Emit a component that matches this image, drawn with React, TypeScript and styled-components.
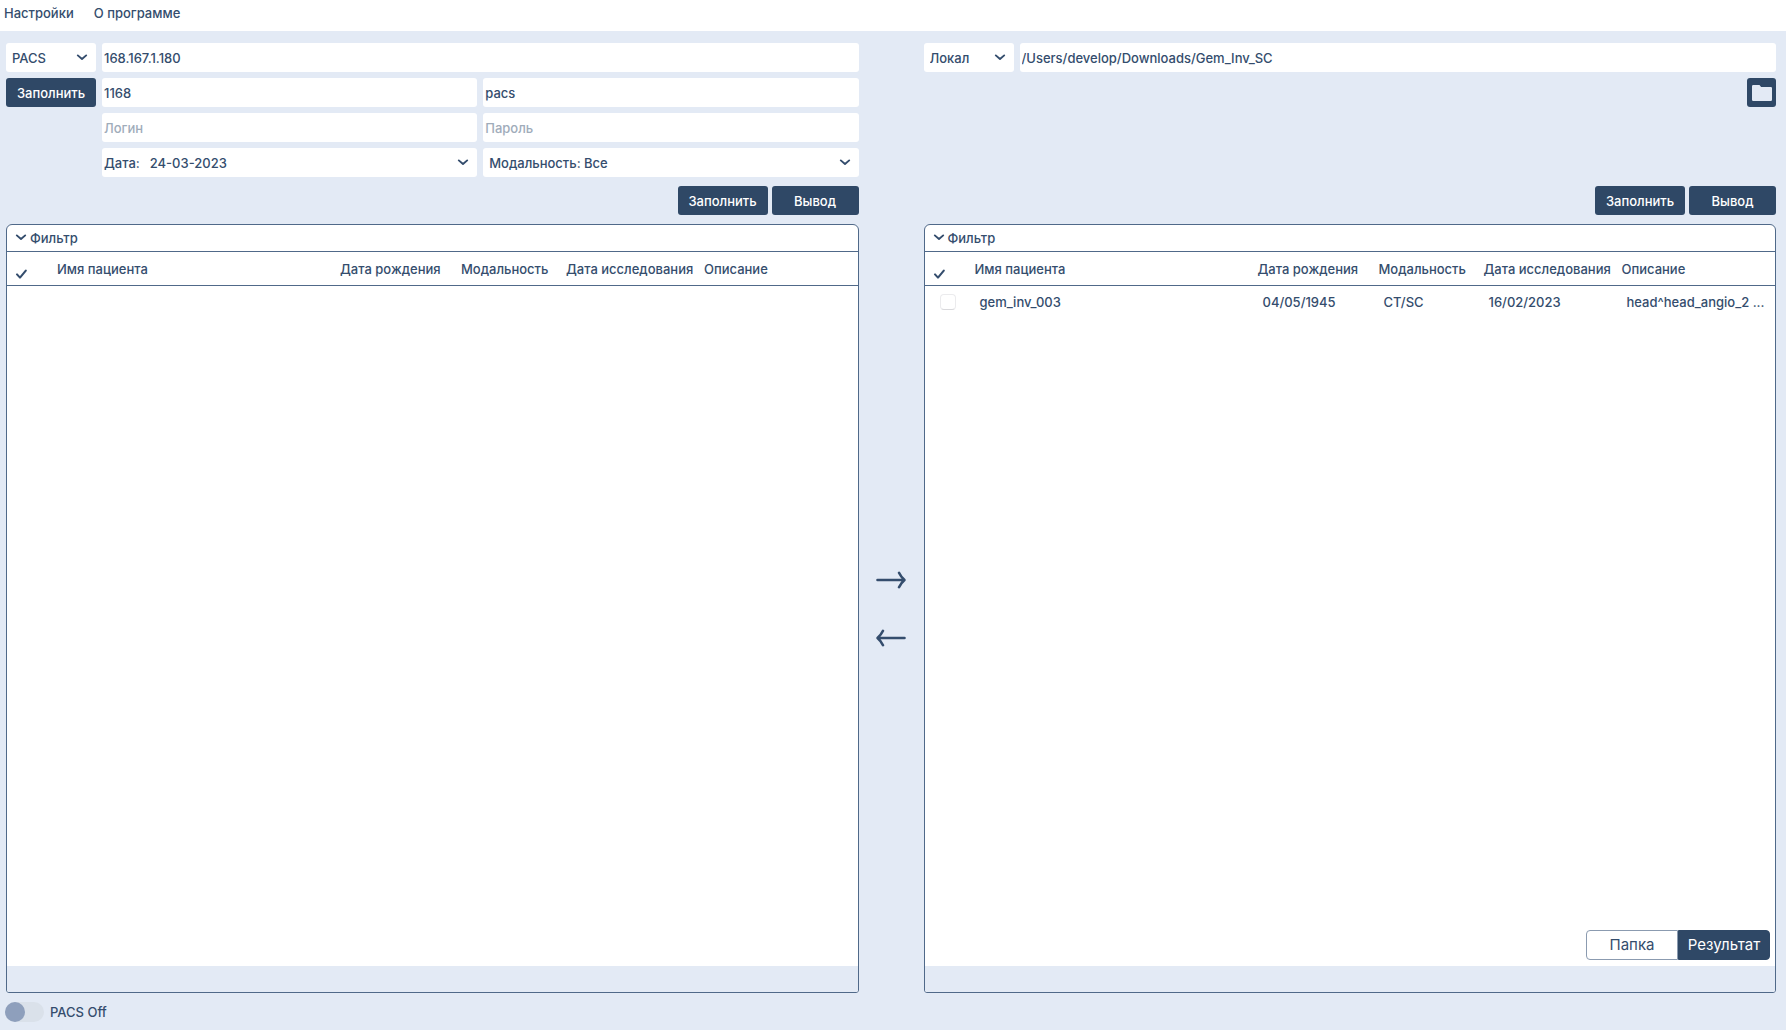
import React, { useState } from "react";
import styled, { createGlobalStyle } from "styled-components";

const color = {
  page: "#e3eaf5",
  ink: "#344d6d",
  fill: "#2f4866",
  line: "#506989",
  hint: "#a0acba",
  white: "#ffffff",
};

const GlobalStyle = createGlobalStyle`
  *, *::before, *::after { box-sizing: border-box; }
  body { margin: 0; background: ${color.page}; }
  body, button, input, select {
    font-family: Inter, "Liberation Sans", sans-serif;
    font-size: 13px;
    line-height: 18px;
    font-weight: 500;
    color: ${color.ink};
  }
`;

const Page = styled.div`
  min-height: 100vh;
  display: flex;
  flex-direction: column;
`;

const MenuBar = styled.nav`
  display: flex;
  gap: 20px;
  padding: 4px 4px 9px;
  background: ${color.white};
`;

const MenuItem = styled.button`
  border: 0;
  padding: 0;
  background: none;
`;

const Main = styled.main`
  flex: 1;
  display: grid;
  grid-template-columns: minmax(0, 1fr) 65px minmax(0, 1fr);
  grid-template-rows: auto 1fr;
  row-gap: 9px;
  padding: 12px 10px 0 6px;
`;

const Source = styled.section`
  display: flex;
  flex-direction: column;
  justify-content: space-between;
  gap: 9px;
`;

const Form = styled.div`
  display: grid;
  grid-template-columns: 90px minmax(0, 1fr) minmax(0, 1fr);
  gap: 6px;
`;

const Field = styled.input<{ $wide?: boolean }>`
  grid-column: ${(p) => (p.$wide ? "span 2" : "auto")};
  width: 100%;
  min-width: 0;
  height: 29px;
  padding: 0 2px;
  border: 0;
  border-radius: 3px;
  background: ${color.white};
  &::placeholder { color: ${color.hint}; opacity: 1; }
`;

const SelectBox = styled.div<{ $column?: number }>`
  grid-column: ${(p) => p.$column ?? "auto"};
  display: grid;
  grid-template-columns: auto minmax(0, 1fr);
  align-items: center;
  height: 29px;
  border-radius: 3px;
  background: ${color.white};
`;

const SelectLabel = styled.label`
  padding-left: 2px;
`;

const Select = styled.select<{ $inset: number }>`
  grid-column: 2;
  grid-row: 1;
  width: 100%;
  height: 29px;
  padding: 0 24px 0 ${(p) => p.$inset}px;
  border: 0;
  border-radius: 3px;
  background: transparent;
  appearance: none;
`;

const SelectMark = styled.span`
  grid-column: 2;
  grid-row: 1;
  justify-self: end;
  display: flex;
  padding-right: 8px;
  pointer-events: none;
`;

const Button = styled.button<{ $width: number }>`
  width: ${(p) => p.$width}px;
  height: 29px;
  padding: 0;
  border: 0;
  border-radius: 3px;
  background: ${color.fill};
  color: ${color.white};
`;

const FolderButton = styled(Button)`
  grid-column: 3;
  justify-self: end;
  display: grid;
  place-items: center;
`;

const Actions = styled.div`
  display: flex;
  justify-content: flex-end;
  gap: 4px;
`;

const Panel = styled.section`
  grid-row: 2;
  display: flex;
  flex-direction: column;
  border: 1px solid ${color.line};
  border-radius: 6px 6px 3px 3px;
  background: ${color.white};
  overflow: hidden;
`;

const FilterToggle = styled.button`
  display: flex;
  align-items: center;
  gap: 3px;
  height: 27px;
  padding: 0 8px;
  border: 0;
  border-bottom: 1px solid ${color.line};
  background: none;
`;

const PanelBody = styled.div`
  flex: 1;
`;

const PanelFooter = styled.div`
  height: 26px;
  background: ${color.page};
`;

const Table = styled.table`
  width: 100%;
  table-layout: fixed;
  border-collapse: separate;
  border-spacing: 0;
`;

const Col = styled.col<{ $width?: number }>`
  width: ${(p) => (p.$width ? `${p.$width}px` : "auto")};
`;

const HeadCell = styled.th`
  height: 34px;
  padding: 0;
  border-bottom: 1px solid ${color.line};
  text-align: left;
  font-weight: 500;
  white-space: nowrap;
`;

const MarkCell = styled(HeadCell)`
  padding: 12px 0 0 8px;
`;

const Cell = styled.td`
  height: 31px;
  padding: 0 0 0 5px;
  white-space: nowrap;
  overflow: hidden;
  text-overflow: ellipsis;
`;

const PickCell = styled(Cell)`
  padding: 0 0 0 15px;
`;

const Pick = styled.input`
  display: block;
  width: 16px;
  height: 16px;
  margin: 0;
  appearance: none;
  border: 1px solid #ebebed;
  border-bottom-color: #d9d9dc;
  border-radius: 4px;
  background: ${color.white};
  &:checked { background: ${color.fill}; }
`;

const Segments = styled.div`
  display: flex;
  justify-content: flex-end;
  padding: 6px 5px;
`;

const Segment = styled.button<{ $active: boolean }>`
  width: 92px;
  height: 30px;
  padding: 0;
  border: 1px solid ${(p) => (p.$active ? color.fill : "#8b9bb0")};
  background: ${(p) => (p.$active ? color.fill : color.white)};
  color: ${(p) => (p.$active ? color.white : color.ink)};
  font-size: 15px;
  font-weight: 400;
  &:first-child { border-radius: 4px 0 0 4px; }
  &:last-child { border-radius: 0 4px 4px 0; }
`;

const Transfer = styled.div`
  grid-row: 2;
  grid-column: 2;
  display: flex;
  flex-direction: column;
  align-items: center;
  justify-content: center;
  gap: 18px;
`;

const ArrowButton = styled.button`
  display: grid;
  place-items: center;
  width: 40px;
  height: 40px;
  padding: 0;
  border: 0;
  background: none;
`;

const StatusBar = styled.footer`
  display: flex;
  padding: 9px 5px 8px;
`;

const SwitchLabel = styled.label`
  display: flex;
  align-items: center;
  gap: 6px;
`;

const Switch = styled.input`
  width: 39px;
  height: 20px;
  margin: 0;
  display: flex;
  appearance: none;
  border-radius: 10px;
  background: #dae1ea;
  &::before {
    content: "";
    width: 20px;
    height: 20px;
    border-radius: 50%;
    background: #8e9fbc;
  }
  &:checked { justify-content: flex-end; }
`;

const Chevron = () => (
  <svg width="12" height="12" viewBox="0 0 12 12" fill="none" aria-hidden="true">
    <path d="M1.8 3.4 6 7l4.200-3.600" stroke={color.ink} strokeWidth="1.9" strokeLinecap="round" strokeLinejoin="round" />
  </svg>
);

const CheckMark = () => (
  <svg width="13" height="12" viewBox="0 0 13 12" fill="none" role="img" aria-label="Выбор">
    <path d="M2 6.4 5 9.600 10.800 2.600" stroke={color.ink} strokeWidth="2.100" strokeLinecap="round" strokeLinejoin="round" />
  </svg>
);

const FolderIcon = () => (
  <svg width="22" height="18" viewBox="0 0 22 18" aria-hidden="true">
    <path d="M1 2.200Q1 1 2.200 1h6.300l1.600 1.900h9.700Q21 2.900 21 4.100v11.700Q21 17 19.800 17H2.200Q1 17 1 15.800z" fill={color.page} />
  </svg>
);

const RightArrow = () => (
  <svg width="32" height="20" viewBox="0 0 32 20" fill="none" aria-hidden="true">
    <path d="M2.500 10H29M24 2.800Q26 7 29.500 10Q26 13 24 17.200" stroke={color.ink} strokeWidth="2.600" strokeLinecap="round" strokeLinejoin="round" />
  </svg>
);

const LeftArrow = () => (
  <svg width="32" height="20" viewBox="0 0 32 20" fill="none" aria-hidden="true">
    <path d="M29.500 10H3M8 2.800Q6 7 2.500 10Q6 13 8 17.200" stroke={color.ink} strokeWidth="2.600" strokeLinecap="round" strokeLinejoin="round" />
  </svg>
);

type Choice = { id: string; name: string; options: string[]; label?: string; column?: number };

const Dropdown = ({ id, name, options, label, column }: Choice) => (
  <SelectBox $column={column}>
    {label && <SelectLabel htmlFor={id}>{label}</SelectLabel>}
    <Select id={id} aria-label={label ? undefined : name} $inset={label ? 10 : 6}>
      {options.map((option) => (
        <option key={option}>{option}</option>
      ))}
    </Select>
    <SelectMark>
      <Chevron />
    </SelectMark>
  </SelectBox>
);

type Study = { name: string; born: string; modality: string; date: string; text: string };

const studies: Study[] = [
  { name: "gem_inv_003", born: "04/05/1945", modality: "CT/SC", date: "16/02/2023", text: "head^head_angio_2 ..." },
];

const titles = ["Имя пациента", "Дата рождения", "Модальность", "Дата исследования", "Описание"];

const StudyPanel = ({ rows, children }: { rows: Study[]; children?: React.ReactNode }) => (
  <Panel>
    <FilterToggle type="button" aria-expanded="false">
      <Chevron />
      Фильтр
    </FilterToggle>
    <PanelBody>
      <Table>
        <colgroup>
          <Col $width={50} />
          <Col $width={283} />
          <Col $width={121} />
          <Col $width={105} />
          <Col $width={138} />
          <Col />
        </colgroup>
        <thead>
          <tr>
            <MarkCell>
              <CheckMark />
            </MarkCell>
            {titles.map((title) => (
              <HeadCell key={title}>{title}</HeadCell>
            ))}
          </tr>
        </thead>
        <tbody>
          {rows.map((row) => (
            <tr key={row.name}>
              <PickCell>
                <Pick type="checkbox" aria-label={row.name} />
              </PickCell>
              <Cell>{row.name}</Cell>
              <Cell>{row.born}</Cell>
              <Cell>{row.modality}</Cell>
              <Cell>{row.date}</Cell>
              <Cell>{row.text}</Cell>
            </tr>
          ))}
        </tbody>
      </Table>
    </PanelBody>
    {children}
    <PanelFooter />
  </Panel>
);

const SourceActions = () => (
  <Actions>
    <Button type="button" $width={90}>Заполнить</Button>
    <Button type="button" $width={87}>Вывод</Button>
  </Actions>
);

export default function App() {
  const [view, setView] = useState("Результат");

  return (
    <Page>
      <GlobalStyle />
      <MenuBar>
        <MenuItem type="button">Настройки</MenuItem>
        <MenuItem type="button">О программе</MenuItem>
      </MenuBar>
      <Main>
        <Source>
          <Form>
            <Dropdown id="left-source" name="Источник" options={["PACS", "Локал"]} />
            <Field $wide aria-label="Адрес" defaultValue="168.167.1.180" />
            <Button type="button" $width={90}>Заполнить</Button>
            <Field aria-label="Порт" defaultValue="1168" />
            <Field aria-label="Имя узла" defaultValue="pacs" />
            <span />
            <Field aria-label="Логин" placeholder="Логин" />
            <Field type="password" aria-label="Пароль" placeholder="Пароль" />
            <Dropdown id="date" name="Дата" label="Дата:" options={["24-03-2023"]} column={2} />
            <Dropdown id="modality" name="Модальность" options={["Модальность: Все"]} column={3} />
          </Form>
          <SourceActions />
        </Source>
        <span />
        <Source>
          <Form>
            <Dropdown id="right-source" name="Источник" options={["Локал", "PACS"]} />
            <Field $wide aria-label="Путь" defaultValue="/Users/develop/Downloads/Gem_Inv_SC" />
            <FolderButton type="button" $width={29} aria-label="Открыть папку">
              <FolderIcon />
            </FolderButton>
          </Form>
          <SourceActions />
        </Source>
        <StudyPanel rows={[]} />
        <Transfer>
          <ArrowButton type="button" aria-label="Вправо">
            <RightArrow />
          </ArrowButton>
          <ArrowButton type="button" aria-label="Влево">
            <LeftArrow />
          </ArrowButton>
        </Transfer>
        <StudyPanel rows={studies}>
          <Segments>
            {["Папка", "Результат"].map((item) => (
              <Segment key={item} type="button" $active={view === item} aria-pressed={view === item} onClick={() => setView(item)}>
                {item}
              </Segment>
            ))}
          </Segments>
        </StudyPanel>
      </Main>
      <StatusBar>
        <SwitchLabel>
          <Switch type="checkbox" role="switch" />
          PACS Off
        </SwitchLabel>
      </StatusBar>
    </Page>
  );
}
